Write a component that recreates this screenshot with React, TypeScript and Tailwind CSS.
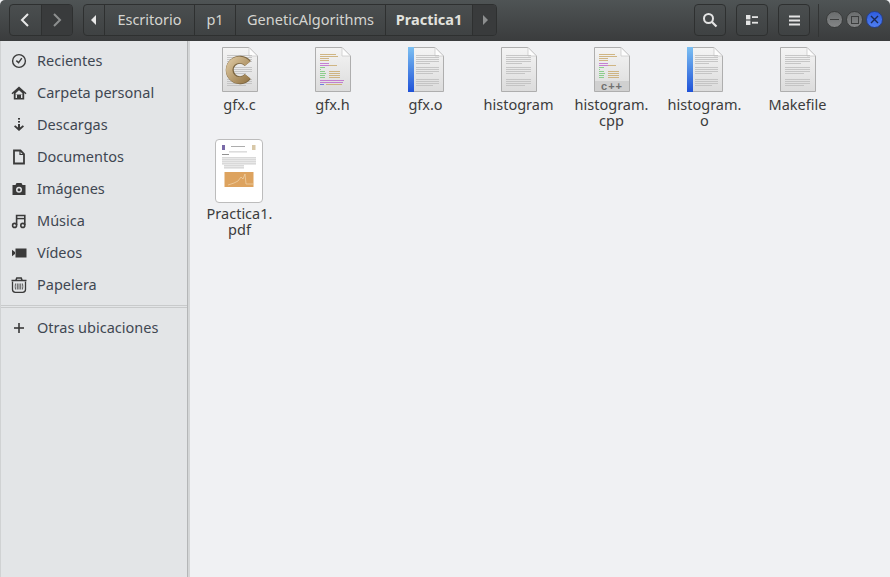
import React from "react";

const font = { fontFamily: '"Noto Sans", sans-serif' };

const Clock = () => (
  <svg width="16" height="16" viewBox="0 0 16 16" fill="none" stroke="#3a3a3a" strokeWidth="1.4">
    <circle cx="8" cy="8" r="6.4" />
    <path d="M5.3 7.6 7.6 9.6 10.8 5.2" />
  </svg>
);
const Home = () => (
  <svg width="16" height="16" viewBox="0 0 16 16">
    <path d="M8 1.5 0.5 8.2 1.4 9.2 2.8 8V14.5H13.2V8L14.6 9.2 15.5 8.2Z" fill="#3a3a3a" />
    <path d="M4.6 8.2 8 5.2 11.4 8.2V9.6H4.6Z" fill="#e3e5e7" />
    <rect x="4.6" y="9.6" width="1.4" height="3.4" fill="#e3e5e7" />
    <rect x="10" y="9.6" width="1.4" height="3.4" fill="#e3e5e7" />
  </svg>
);
const Download = () => (
  <svg width="16" height="16" viewBox="0 0 16 16" fill="#3a3a3a">
    <rect x="7" y="1" width="2" height="1.6" />
    <rect x="7" y="4" width="2" height="1.6" />
    <path d="M7 7H9V10.4L11.8 8.2 13 9.4 8 14 3 9.4 4.2 8.2 7 10.4Z" />
  </svg>
);
const Doc = () => (
  <svg width="16" height="16" viewBox="0 0 16 16" fill="none" stroke="#3a3a3a" strokeWidth="1.8">
    <path d="M3 1.5H9.5L13 5V14.5H3Z" />
    <path d="M9 1.5V5.5H13" strokeWidth="1.2" />
  </svg>
);
const Camera = () => (
  <svg width="16" height="16" viewBox="0 0 16 16">
    <path d="M5.5 2H10.5L11.5 4H14.5V14H1.5V4H4.5Z" fill="#3a3a3a" />
    <circle cx="8" cy="8.8" r="3" fill="#e3e5e7" />
    <circle cx="8" cy="8.8" r="1.5" fill="#3a3a3a" />
  </svg>
);
const Music = () => (
  <svg width="16" height="16" viewBox="0 0 16 16" fill="none" stroke="#3a3a3a" strokeWidth="1.6">
    <circle cx="3.6" cy="12.4" r="2" />
    <circle cx="11.8" cy="12.4" r="2" />
    <path d="M5.6 12V2.5H13.8V12" />
    <path d="M5.6 5.6H13.8" strokeWidth="1.4" />
  </svg>
);
const Video = () => (
  <svg width="16" height="16" viewBox="0 0 16 16" fill="#3a3a3a">
    <rect x="4.5" y="3.5" width="11" height="9" />
    <path d="M1 4.8 4 7V9L1 11.2Z" />
  </svg>
);
const Trash = () => (
  <svg width="16" height="16" viewBox="0 0 16 16" fill="none" stroke="#3a3a3a" strokeWidth="1.2">
    <path d="M0.5 3.4H15.5M5 3 5.8 1H10.2L11 3" strokeWidth="1.5" />
    <path d="M1.5 4.5V12.6C1.5 14.2 2.8 15.3 4.4 15.3H11.6C13.2 15.3 14.5 14.2 14.5 12.6V4.5" strokeWidth="1.3" />
    <path d="M4.6 6.5C4.1 8.5 4.1 10.5 4.6 12.5M8 6.5V12.5M11.4 6.5C11.9 8.5 11.9 10.5 11.4 12.5M6.3 6.5V12.5M9.7 6.5V12.5" strokeWidth="0.8" />
  </svg>
);
const Plus = () => (
  <svg width="16" height="16" viewBox="0 0 16 16" fill="#3a3a3a">
    <rect x="7.2" y="3" width="1.6" height="10" />
    <rect x="3" y="7.2" width="10" height="1.6" />
  </svg>
);

const places = [
  { label: "Recientes", icon: <Clock /> },
  { label: "Carpeta personal", icon: <Home /> },
  { label: "Descargas", icon: <Download /> },
  { label: "Documentos", icon: <Doc /> },
  { label: "Imágenes", icon: <Camera /> },
  { label: "Música", icon: <Music /> },
  { label: "Vídeos", icon: <Video /> },
  { label: "Papelera", icon: <Trash /> },
];

// grey text lines on the page icons: y and how much shorter than a full line
const textLines = [
  [9, 0], [11, 0], [13, 0], [15, 0], [17, 9],
  [21, 0], [23, 0], [25, 0], [27, 6],
  [33, 0], [35, 0], [37, 0], [39, 6],
];

const Page = ({ children, blue }: { children?: React.ReactNode; blue?: boolean }) => (
  <svg width="48" height="48" viewBox="0 0 48 48" className="block">
    <defs>
      <linearGradient id="pg" x1="0" y1="0" x2="0" y2="1">
        <stop offset="0" stopColor="#f4f4f4" />
        <stop offset="1" stopColor="#dcdcdc" />
      </linearGradient>
      <linearGradient id="bl" x1="0" y1="0" x2="0" y2="1">
        <stop offset="0" stopColor="#7cc0f2" />
        <stop offset="1" stopColor="#1f52d8" />
      </linearGradient>
    </defs>
    <path d="M6.5 1.5H33L41.5 10V45.5H6.5Z" fill="url(#pg)" stroke="#aeaeae" />
    {blue && <rect x="6" y="1" width="6" height="45" fill="url(#bl)" />}
    <path d="M33 1.5V10H41.5Z" fill="#fdfdfd" stroke="#cacaca" strokeWidth="0.8" />
    {children}
  </svg>
);

const TextLines = ({ x = 11, w = 25 }: { x?: number; w?: number }) => (
  <g fill="#bdbdbd">
    {textLines.map(([y, cut]) => (
      <rect key={y} x={x} y={y} width={w - cut} height="0.8" />
    ))}
  </g>
);

const tan = "#c9a86a";
const purple = "#bb66cc";
const green = "#77c977";
const code = [
  [8, 11, 16, tan], [10, 11, 18, tan], [12, 11, 9, tan], [14, 11, 9, tan],
  [17, 11, 9, purple], [19, 11, 9, purple], [19, 20, 8, tan],
  [21, 11, 5, green], [23, 11, 1, green],
  [25, 11, 5, green], [25, 20, 11, tan],
  [27, 11, 6, green], [27, 20, 11, tan],
  [29, 11, 5, green], [29, 20, 11, tan],
  [31, 11, 5, green], [31, 20, 11, tan],
  [34, 11, 24, purple], [36, 11, 23, purple],
  [38, 11, 4, "#5566dd"], [38, 17, 16, tan],
] as const;

const CodeLines = ({ count }: { count: number }) => (
  <g opacity="0.8">
    {code.slice(0, count).map(([y, x, w, c], i) => (
      <rect key={i} x={x} y={y} width={w} height="1" fill={c} />
    ))}
  </g>
);

const CIcon = () => (
  <Page>
    <defs>
      <linearGradient id="cg" x1="0" y1="0" x2="1" y2="1">
        <stop offset="0" stopColor="#d9c39b" />
        <stop offset="1" stopColor="#9a7c4c" />
      </linearGradient>
    </defs>
    <TextLines />
    <path d="M31.8 17.5A10.2 10.2 0 1 0 31.8 30.5" fill="none" stroke="#7d6742" strokeWidth="8" />
    <path d="M31.5 17.8A10.2 10.2 0 1 0 31.5 30.2" fill="none" stroke="url(#cg)" strokeWidth="6.4" />
  </Page>
);

const CppIcon = () => (
  <Page>
    <CodeLines count={17} />
    <rect x="7" y="35" width="34" height="10" fill="#d0d0d0" />
    <text x="24" y="43.5" textAnchor="middle" fontSize="11" fontWeight="700" letterSpacing="1" fill="#707070" fontFamily="Liberation Sans, sans-serif">
      c++
    </text>
  </Page>
);

const PdfThumb = () => (
  <div className="mr-[2px] h-[64px] w-[48px] rounded-[4px] border border-[#bcbcbc] bg-white">
    <svg width="46" height="62" viewBox="0 0 46 62" className="block">
      <rect x="6" y="5" width="3" height="5" fill="#7a6aa8" />
      <rect x="36" y="5" width="3.5" height="5" fill="#d8c8a8" />
      <rect x="15" y="6" width="14" height="0.8" fill="#999" />
      <rect x="13" y="11.5" width="18" height="0.8" fill="#bbb" />
      <rect x="6" y="14" width="7" height="0.8" fill="#777" />
      {[17.5, 19.5, 21.5, 23.5, 25.5, 27.5].map((y, i) => (
        <rect key={y} x={i > 3 ? 8 : 6} y={y} width={i > 3 ? 20 : 34} height="0.8" fill="#b4b4b4" />
      ))}
      <rect x="8.5" y="32" width="29" height="15" fill="#dda35f" />
      <path d="M12 45 18 43 22 41 25 37 27 39 29 34 30 44 37 44" fill="none" stroke="#f0d5ad" strokeWidth="0.7" />
    </svg>
  </div>
);

const files = [
  { name: "gfx.c", icon: <CIcon /> },
  { name: "gfx.h", icon: <Page><CodeLines count={21} /></Page> },
  { name: "gfx.o", icon: <Page blue><TextLines x={14} w={23} /></Page> },
  { name: "histogram", icon: <Page><TextLines /></Page> },
  { name: "histogram.\ncpp", icon: <CppIcon /> },
  { name: "histogram.\no", icon: <Page blue><TextLines x={14} w={23} /></Page> },
  { name: "Makefile", icon: <Page><TextLines /></Page> },
  { name: "Practica1.\npdf", icon: <PdfThumb /> },
];

const btn = "flex h-[32px] items-center justify-center border border-[#2e3030] bg-gradient-to-b from-[#4a4e4f] to-[#3f4243]";
const crumb = "flex h-full items-center justify-center border-l border-[#2e3030] text-[14.5px] text-[#d4d4d0]";

const FileItem = ({ name, icon }: { name: string; icon: React.ReactNode }) => (
  <div className="flex flex-col items-center">
    <div className="flex justify-center">{icon}</div>
    <div className="mt-[2px] whitespace-pre-line text-center text-[14.5px] leading-[16px] text-[#3c3c3c]">{name}</div>
  </div>
);

export default function App() {
  return (
    <div className="flex h-[577px] w-[890px] flex-col overflow-hidden bg-[#f0f1f3]" style={font}>
      {/* header bar */}
      <div className="flex h-[41px] shrink-0 items-start rounded-t-[5px] bg-gradient-to-b from-[#4f5455] to-[#3a3c3d] pt-[4px] pl-[9px]">
        <div className={`${btn} w-[64px] overflow-hidden rounded-[4px] p-0`}>
          <div className="flex h-full w-[32px] items-center justify-center">
            <svg width="12" height="14" viewBox="0 0 12 14" fill="none" stroke="#e8e8e8" strokeWidth="2"><path d="M9 1 3 7 9 13" /></svg>
          </div>
          <div className="flex h-full w-[32px] items-center justify-center border-l border-[#2e3030] bg-[#393b3c]">
            <svg width="12" height="14" viewBox="0 0 12 14" fill="none" stroke="#8d8f8f" strokeWidth="2"><path d="M3 1 9 7 3 13" /></svg>
          </div>
        </div>
        <div className={`${btn} ml-[10px] w-[414px] justify-start overflow-hidden rounded-[4px]`}>
          <div className="flex h-full w-[20px] items-center justify-center">
            <svg width="6" height="10" viewBox="0 0 6 10" fill="#e8e8e8"><path d="M5 0V10L0 5Z" /></svg>
          </div>
          <div className={`${crumb} w-[90px]`}>Escritorio</div>
          <div className={`${crumb} w-[41px]`}>p1</div>
          <div className={`${crumb} w-[150px]`}>GeneticAlgorithms</div>
          <div className={`${crumb} w-[87px] font-bold text-[#e2e2de]`}>Practica1</div>
          <div className="flex h-full flex-1 items-center justify-center border-l border-[#2e3030] bg-[#393b3c]">
            <svg width="6" height="10" viewBox="0 0 6 10" fill="#8d8f8f"><path d="M1 0V10L6 5Z" /></svg>
          </div>
        </div>
        <div className={`${btn} ml-[197px] w-[32px] rounded-[4px]`}>
          <svg width="16" height="16" viewBox="0 0 16 16" fill="none" stroke="#e4e4e4"><circle cx="6.5" cy="6.5" r="4.5" strokeWidth="2" /><path d="M10 10 14.5 14.5" strokeWidth="2.2" /></svg>
        </div>
        <div className={`${btn} ml-[10px] w-[32px] rounded-[4px]`}>
          <svg width="12" height="10" viewBox="0 0 12 10" fill="#e4e4e4"><rect x="0" y="0" width="4.4" height="4.4" /><rect x="0" y="5.6" width="4.4" height="4.4" /><rect x="6" y="1.2" width="6" height="1.8" /><rect x="6" y="6.8" width="6" height="1.8" /></svg>
        </div>
        <div className={`${btn} ml-[10px] w-[32px] rounded-[4px]`}>
          <svg width="11" height="11" viewBox="0 0 11 11" fill="#e4e4e4"><rect y="0.5" width="11" height="2" /><rect y="4.5" width="11" height="2" /><rect y="8.5" width="11" height="2" /></svg>
        </div>
        <div className="ml-[8px] h-[33px] w-px bg-[#333535]" />
        <div className="ml-[7px] mt-[7px] flex items-center gap-[3px]">
          <div className="flex h-[17px] w-[17px] items-center justify-center rounded-full border border-[#3a3c3c] bg-gradient-to-b from-[#6a6d6e] to-[#848687]">
            <div className="h-[1.5px] w-[9px] bg-[#3c3e3e]" />
          </div>
          <div className="flex h-[17px] w-[17px] items-center justify-center rounded-full border border-[#3a3c3c] bg-gradient-to-b from-[#6a6d6e] to-[#848687]">
            <div className="h-[8px] w-[8px] border border-[#3c3e3e]" />
          </div>
          <div className="flex h-[17px] w-[17px] items-center justify-center rounded-full border border-[#26408c] bg-gradient-to-b from-[#2f5de0] to-[#4f7ef2]">
            <svg width="9" height="9" viewBox="0 0 9 9" stroke="#1c2a55" strokeWidth="1.4"><path d="M1 1 8 8M8 1 1 8" /></svg>
          </div>
        </div>
      </div>

      <div className="flex min-h-0 flex-1">
        {/* sidebar */}
        <div className="flex w-[188px] shrink-0 flex-col border-r border-r-[#b4b6b7] border-l border-l-[#d0d2d3] bg-[#e3e5e7] pt-[4px] text-[14.5px] text-[#3f4752]">
          {places.map((p) => (
            <div key={p.label} className="flex h-[32px] items-center pl-[10px]">
              <div className="flex w-[26px] shrink-0">{p.icon}</div>
              <span>{p.label}</span>
            </div>
          ))}
          <div className="mt-[4px] h-[3px] border-y border-[#c8cacb]" />
          <div className="flex h-[40px] items-center pl-[10px]">
            <div className="flex w-[26px] shrink-0"><Plus /></div>
            <span>Otras ubicaciones</span>
          </div>
        </div>
        <div className="w-[2px] shrink-0 bg-[#d4d6d7]" />

        {/* file grid */}
        <div className="flex-1 pl-[3px] pt-[5px]">
          <div className="grid grid-cols-[repeat(7,93px)] gap-y-[11px]">
            {files.map((f) => (
              <FileItem key={f.name} name={f.name} icon={f.icon} />
            ))}
          </div>
        </div>
      </div>
    </div>
  );
}
